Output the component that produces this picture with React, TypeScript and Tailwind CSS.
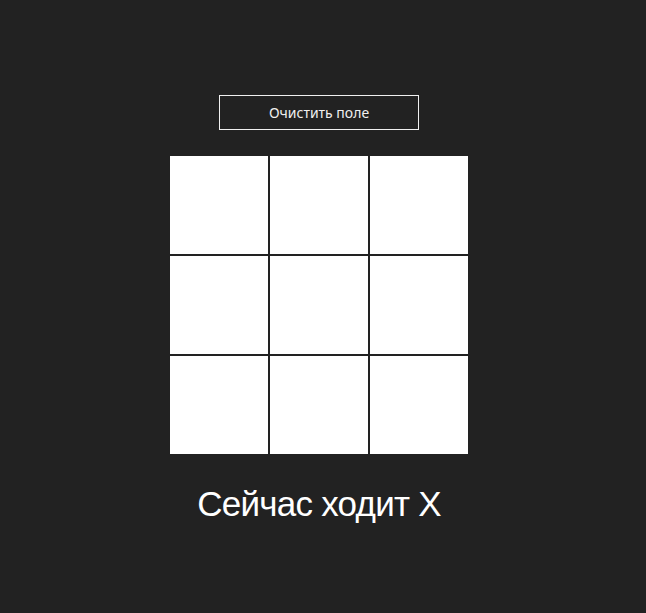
import { useState } from "react";

export default function App() {
  const [cells, setCells] = useState<string[]>(Array(9).fill(""));
  const [turn, setTurn] = useState("X");

  const play = (i: number) => {
    if (cells[i]) return;
    const next = [...cells];
    next[i] = turn;
    setCells(next);
    setTurn(turn === "X" ? "O" : "X");
  };

  const reset = () => {
    setCells(Array(9).fill(""));
    setTurn("X");
  };

  return (
    <div className="min-h-screen bg-[#222222]">
      <div className="w-[638px] flex flex-col items-center pt-[95px]">
        <button
          onClick={reset}
          className="w-[200px] h-[35px] border border-[#f0f0f0] text-[#f0f0f0] text-[14px] bg-transparent"
          style={{ fontFamily: '"Noto Sans", sans-serif' }}
        >
          Очистить поле
        </button>
        <div className="mt-[26px] grid grid-cols-[98px_98px_98px] grid-rows-[98px_98px_98px] gap-[2px]">
          {cells.map((c, i) => (
            <div
              key={i}
              onClick={() => play(i)}
              className="bg-white flex items-center justify-center text-5xl text-[#222222] cursor-pointer"
            >
              {c}
            </div>
          ))}
        </div>
        <p
          className="mt-[30px] text-[35px] text-white leading-[40px] tracking-[-0.75px]"
          style={{ fontFamily: '"Liberation Sans", Arial, sans-serif' }}
        >
          Сейчас ходит {turn}
        </p>
      </div>
    </div>
  );
}
